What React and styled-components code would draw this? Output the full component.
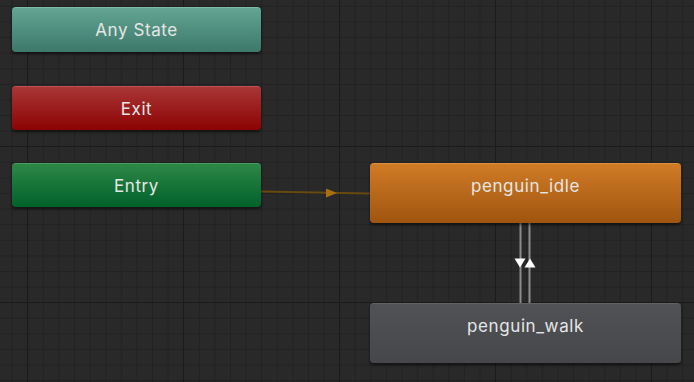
import React from 'react'
import styled, {createGlobalStyle, css} from 'styled-components'

const Global = createGlobalStyle`
  html, body {
    margin: 0;
    padding: 0;
    background: #282828;
  }
`

const tones = {
  any: css`
    background: linear-gradient(#62a592, #3d786b);
    border-top: 1px solid #7dbaa9;
  `,
  exit: css`
    background: linear-gradient(#a93636, #8c0303);
    border-top: 1px solid #bf5252;
  `,
  entry: css`
    background: linear-gradient(#2d8747, #00612a);
    border-top: 1px solid #4a9a62;
  `,
  active: css`
    background: linear-gradient(#d07b26, #9f550f);
    border-top: 1px solid #dc9040;
  `,
  state: css`
    background: linear-gradient(#505255, #45474a);
    border-top: 1px solid #606265;
  `,
}

const S = {
  Canvas: styled.div`
  position: relative;
  width: 694px;
  height: 382px;
  overflow: hidden;
  background-color: #292929;
  background-image:
    linear-gradient(to right, #1b1b1b 1px, transparent 1px),
    linear-gradient(to bottom, #1b1b1b 1px, transparent 1px),
    linear-gradient(to right, #222222 1px, transparent 1px),
    linear-gradient(to bottom, #222222 1px, transparent 1px);
  background-size: 156px 156px, 156px 156px, 15.6px 15.6px, 15.6px 15.6px;
  background-position: 27px 0, 0 146px, 11.7px 0, 0 5.9px;
  `,

  Wires: styled.svg`
  position: absolute;
  left: 0;
  top: 0;
  width: 694px;
  height: 382px;
  `,

  Node: styled.div`
  position: absolute;
  box-sizing: border-box;
  display: flex;
  justify-content: center;
  border-radius: 4px;
  box-shadow: 0 2px 3px rgba(0, 0, 0, 0.55);
  ${p => tones[p.$tone]};
  `,

  Label: styled.span`
  height: 42px;
  line-height: 42px;
  margin-top: 1px;
  color: #e6e6e6;
  font-family: Inter, "Noto Sans", sans-serif;
  font-size: 17px;
  letter-spacing: 0.6px;
  white-space: nowrap;
  `,
}

const nodes = [
  {label: 'Any State', tone: 'any', x: 12, y: 7, w: 249, h: 45},
  {label: 'Exit', tone: 'exit', x: 12, y: 86, w: 249, h: 44},
  {label: 'Entry', tone: 'entry', x: 12, y: 163, w: 249, h: 44},
  {label: 'penguin_idle', tone: 'active', x: 370, y: 163, w: 311, h: 60},
  {label: 'penguin_walk', tone: 'state', x: 370, y: 303, w: 311, h: 60},
]

function App() {
  return (
    <>
      <Global />
      <S.Canvas>
        <S.Wires viewBox='0 0 694 382'>
          <line x1='261' y1='191.5' x2='370' y2='193.5' stroke='#684a0e' strokeWidth='2' />
          <polygon points='326,188.5 337,193 326,197.5' fill='#a8700f' />
          <line x1='520.5' y1='223' x2='520.5' y2='303' stroke='#8c8c8c' strokeWidth='2' />
          <line x1='529.5' y1='223' x2='529.5' y2='303' stroke='#8c8c8c' strokeWidth='2' />
          <polygon points='514.5,258.5 525.5,258.5 520,267.5' fill='#ffffff' />
          <polygon points='524.5,267.5 535.5,267.5 530,258.5' fill='#ffffff' />
        </S.Wires>
        {nodes.map(n => (
          <S.Node key={n.label} $tone={n.tone} style={{left: n.x, top: n.y, width: n.w, height: n.h}}>
            <S.Label>{n.label}</S.Label>
          </S.Node>
        ))}
      </S.Canvas>
    </>
  )
}

export default App
